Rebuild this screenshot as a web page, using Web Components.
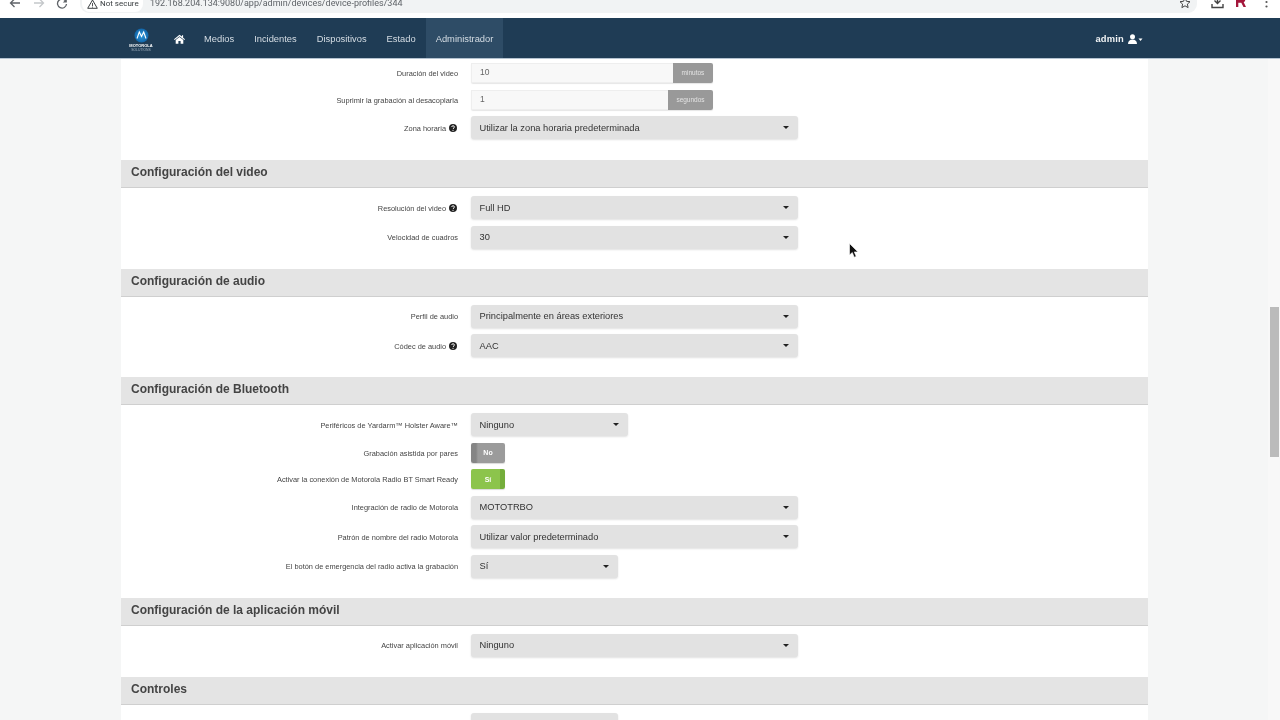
<!DOCTYPE html>
<html lang="es"><head><meta charset="utf-8"><title>Perfil de dispositivo</title>
<style>
html,body{margin:0;height:100%;overflow:hidden;background:#fff;font-family:"Liberation Sans",Arial,sans-serif;color:#333}
body{display:flex;flex-direction:column;height:720px;filter:blur(.3px)}
</style></head><body>
<browser-bar></browser-bar>
<top-nav></top-nav>
<page-main>
  <cfg-section flush pad="1px 0 17.500px">
    <cfg-row label="Duración del video" h="27"><cfg-input value="10" unit="minutos" unitw="40"></cfg-input></cfg-row>
    <cfg-row label="Suprimir la grabación al desacoplarla" h="27"><cfg-input value="1" unit="segundos" unitw="45"></cfg-input></cfg-row>
    <cfg-row label="Zona horaria" help><cfg-select value="Utilizar la zona horaria predeterminada"></cfg-select></cfg-row>
  </cfg-section>
  <cfg-section title="Configuración del video">
    <cfg-row label="Resolución del video" help><cfg-select value="Full HD"></cfg-select></cfg-row>
    <cfg-row label="Velocidad de cuadros"><cfg-select value="30"></cfg-select></cfg-row>
  </cfg-section>
  <cfg-section title="Configuración de audio">
    <cfg-row label="Perfil de audio"><cfg-select value="Principalmente en áreas exteriores"></cfg-select></cfg-row>
    <cfg-row label="Códec de audio" help><cfg-select value="AAC"></cfg-select></cfg-row>
  </cfg-section>
  <cfg-section title="Configuración de Bluetooth">
    <cfg-row label="Periféricos de Yardarm™ Holster Aware™"><cfg-select value="Ninguno" w="157"></cfg-select></cfg-row>
    <cfg-row label="Grabación asistida por pares" h="26.5"><cfg-toggle label="No"></cfg-toggle></cfg-row>
    <cfg-row label="Activar la conexión de Motorola Radio BT Smart Ready" h="26.5"><cfg-toggle label="Sí" on></cfg-toggle></cfg-row>
    <cfg-row label="Integración de radio de Motorola"><cfg-select value="MOTOTRBO"></cfg-select></cfg-row>
    <cfg-row label="Patrón de nombre del radio Motorola"><cfg-select value="Utilizar valor predeterminado"></cfg-select></cfg-row>
    <cfg-row label="El botón de emergencia del radio activa la grabación"><cfg-select value="Sí" w="147"></cfg-select></cfg-row>
  </cfg-section>
  <cfg-section title="Configuración de la aplicación móvil">
    <cfg-row label="Activar aplicación móvil"><cfg-select value="Ninguno"></cfg-select></cfg-row>
  </cfg-section>
  <cfg-section title="Controles">
    <cfg-row label=""><cfg-select value="" w="147"></cfg-select></cfg-row>
  </cfg-section>
</page-main>
<mouse-cursor></mouse-cursor>
<script>
function def(name, render){
  customElements.define(name, class extends HTMLElement{
    connectedCallback(){
      if(this.shadowRoot) return;
      this.attachShadow({mode:'open'}).innerHTML = render(this);
    }
  });
}
def('browser-bar', () => `<style>
:host{display:flex;align-items:flex-start;height:18px;flex:none;background:#fff;overflow:hidden;color:#5f6368;font-family:Roboto,"Liberation Sans",sans-serif}
.icons{display:flex;gap:9.500px;padding:0 0 0 8px;width:80px;box-sizing:border-box;margin-top:-3px}
svg{display:block;flex:none}
.pill{margin-top:-2px;width:1117px;height:15px;border-radius:0 0 9px 9px;background:#f1f3f4;display:flex;align-items:flex-start;flex:none;box-sizing:border-box;padding:0 6px 0 2px}
.sec{display:flex;align-items:center;gap:2px;background:#fff;border-radius:0 0 8px 8px;height:14px;padding:0 5px 2px;font-size:8px;line-height:10px;color:#3c4043;width:61px;box-sizing:border-box;flex:none;white-space:nowrap}
.url{font-size:9px;line-height:11px;margin-top:-.5px;color:#5f6368;margin-left:7px;flex:1;white-space:nowrap}
.star{margin-top:-1px}
.right{display:flex;align-items:center;margin-top:-4px;margin-left:14px;gap:11px}
</style>
<div class="icons">
<svg width="14" height="12" viewBox="0 0 14 12"><path d="M12 6H3M6.500 2 2.500 6l4 4" fill="none" stroke="#5f6368" stroke-width="1.300"/></svg>
<svg width="14" height="12" viewBox="0 0 14 12"><path d="M2 6h9M7.500 2l4 4-4 4" fill="none" stroke="#c4c7ca" stroke-width="1.300"/></svg>
<svg width="14" height="12" viewBox="0 0 14 12"><path d="M11 4.500A4.500 4.500 0 1 0 11.500 7" fill="none" stroke="#5f6368" stroke-width="1.300"/><path d="M11.800 1.500v4h-4z" fill="#5f6368"/></svg>
</div>
<div class="pill">
  <div class="sec"><svg width="11" height="10" viewBox="0 0 11 10"><path d="M5.500 1 10.300 9.300H.7z" fill="none" stroke="#3c4043" stroke-width="1"/><path d="M5.500 4v3M5.500 7.600v1" stroke="#3c4043" stroke-width=".9"/></svg><span>Not secure</span></div>
  <span class="url">192.168.204.134:9080/app/admin/devices/device-profiles/344</span>
  <svg class="star" width="12" height="12" viewBox="0 0 12 12"><path d="M6 1l1.500 3.300 3.500.4-2.600 2.400.7 3.500L6 8.800 2.900 10.600l.7-3.500L1 4.700l3.500-.4z" fill="none" stroke="#444" stroke-width="1"/></svg>
</div>
<div class="right">
  <svg width="13" height="13" viewBox="0 0 13 13"><path d="M6.500 0v7M3.500 4.500l3 3 3-3M1 8v3.500h11V8" fill="none" stroke="#444" stroke-width="1.400"/></svg>
  <svg width="12" height="13" viewBox="0 0 12 13"><path d="M1 1h6.500a2.800 2.800 0 0 1 1.200 5.300L11 11H8.500L6.300 6.700H3.300V11H1z" fill="#a3163b"/></svg>
  <svg style="margin-left:7px" width="3" height="13" viewBox="0 0 3 13"><circle cx="1.500" cy="6" r="1.100" fill="#555"/><circle cx="1.500" cy="10.500" r="1.100" fill="#555"/></svg>
</div>`);
def('top-nav', () => `<style>
:host{display:flex;align-items:stretch;height:40px;flex:none;background:#1f3c55;color:#d5dde4;font-size:9.350px;box-shadow:0 1px 0 #b4c3d1;position:relative;z-index:1;padding-left:128px}
.logo{width:26px;margin-right:9px;display:flex;flex-direction:column;align-items:center;padding-top:10px;box-sizing:border-box;color:#fff}
.logo b{font-size:4px;line-height:4px;margin-top:1px;white-space:nowrap}
.logo i{font-size:3.400px;line-height:4px;font-style:normal;color:#a9b8c6;white-space:nowrap}
a{display:flex;align-items:center;padding:2px 10px 0;color:inherit;text-decoration:none;white-space:nowrap}
a.home{padding:1px 9px 0 11px}
a.on{background:#2e4c66}
.user{margin-left:auto;margin-right:137px;padding-top:2px;display:flex;align-items:center;gap:4px;color:#f0f3f5;font-weight:bold;letter-spacing:.2px}
svg{display:block}
</style>
<div class="logo"><svg width="15" height="15" viewBox="0 0 15 15"><defs><radialGradient id="g"><stop offset="0" stop-color="#2d9be0"/><stop offset="1" stop-color="#1165a8"/></radialGradient></defs><circle cx="7.500" cy="7.500" r="7" fill="url(#g)"/><path d="M3 10.500 5.300 4 7.500 8.500 9.700 4l2.300 6.500" fill="none" stroke="#fff" stroke-width="1.100"/></svg><b>MOTOROLA</b><i>SOLUTIONS</i></div>
<a class="home" aria-label="Inicio"><svg width="11" height="10" viewBox="0 0 11 10"><path d="M5.500.8 0 5.300l.7.8L5.500 2.200l4.800 3.900.7-.8-1.900-1.600V1.200H8v1.200z" fill="#fff"/><path d="M5.500 3 1.700 6.100V9.700h2.700V7h2.200v2.700h2.700V6.100z" fill="#fff"/></svg></a>
<a>Medios</a><a>Incidentes</a><a>Dispositivos</a><a>Estado</a><a class="on">Administrador</a>
<div class="user"><span>admin</span><svg width="15" height="10" viewBox="0 0 15 10"><circle cx="4.500" cy="2.700" r="2.500" fill="#fff"/><path d="M0 10c0-3 1.800-4.500 4.500-4.500S9 7 9 10z" fill="#fff"/><path d="M10.500 4.500h4L12.500 7z" fill="#fff"/></svg></div>`);
def('page-main', () => `<style>
:host{display:flex;flex:1;min-height:0;background:#f5f6f6;overflow:hidden}
.panel{margin-left:121px;width:1027px;background:#fff;flex:none;overflow:hidden;height:100%}
.track{margin-left:auto;width:12px;flex:none;background:#f8f8f8}
.thumb{margin-top:249px;height:150px;width:9px;margin-left:2px;background:#bbb}
</style><div class="panel"><slot></slot></div><div class="track"><div class="thumb"></div></div>`);
def('cfg-section', el => `<style>
:host{display:block}
h2{margin:0;height:27px;box-sizing:content-box;background:#e4e4e4;border-bottom:1px solid #cfcfcf;font-size:12px;line-height:25px;color:#444;padding-left:10px;font-weight:bold}
.body{padding:${el.getAttribute('pad')||'5px 0 16.500px'}}
</style>${el.hasAttribute('flush')?'':`<h2>${el.getAttribute('title')}</h2>`}<div class="body"><slot></slot></div>`);
def('cfg-row', el => `<style>
:host{display:grid;grid-template-columns:${el.hasAttribute('help')?'336px':'337px'} 327px;column-gap:${el.hasAttribute('help')?'14px':'13px'};align-items:center;height:${el.getAttribute('h')||'29.5'}px}
.l{text-align:right;font-size:7.400px;color:#444;display:flex;justify-content:flex-end;align-items:center;gap:3px;white-space:nowrap;padding-top:1px}
svg{display:block;flex:none}
</style><div class="l"><span>${el.getAttribute('label')}</span>${el.hasAttribute('help')?`<svg width="8" height="8" viewBox="0 0 8 8"><circle cx="4" cy="4" r="4" fill="#222"/><path d="M2.700 3c0-1.700 2.700-1.700 2.700 0 0 1-1.300 1-1.300 2" fill="none" stroke="#fff" stroke-width=".9"/><circle cx="4" cy="6.300" r=".6" fill="#fff"/></svg>`:''}</div><div><slot></slot></div>`);
def('cfg-select', el => `<style>
:host{display:flex;align-items:center;justify-content:space-between;height:23px;width:${el.getAttribute('w')||327}px;box-sizing:border-box;padding:0 9px 0 8.500px;background:#e2e2e2;border-radius:3px;box-shadow:0 1px 2px rgba(0,0,0,.12);font-size:9.300px;color:#333}
i{width:0;height:0;border:3px solid transparent;border-top-color:#222;border-bottom:0}
</style><span>${el.getAttribute('value')}</span><i></i>`);
def('cfg-input', el => `<style>
:host{display:flex;height:20px;width:242px;font-size:8.500px;border-radius:2px;box-shadow:0 1px 1px rgba(0,0,0,.1)}
.v{flex:1;background:#f8f8f8;border:1px solid #eee;border-right:0;box-sizing:border-box;padding-left:8px;line-height:17px;color:#666}
.u{width:${el.getAttribute('unitw')}px;flex:none;background:#999;color:#e3e3e3;font-size:6.500px;line-height:19px;text-align:center;border-radius:0 2px 2px 0}
</style><div class="v">${el.getAttribute('value')}</div><div class="u">${el.getAttribute('unit')}</div>`);
def('cfg-toggle', el => {const on=el.hasAttribute('on');return `<style>
:host{display:flex;width:34px;height:20px;border-radius:2px;background:${on?'linear-gradient(90deg,#8cc44c 0 29px,#74ad3b 29px)':'linear-gradient(90deg,#858585 0 5px,#9b9b9b 7px)'};color:#fff;font-size:7px;font-weight:bold;align-items:center;justify-content:center;box-sizing:border-box;box-shadow:0 1px 1px rgba(0,0,0,.15)}
</style><span>${el.getAttribute('label')}</span>`});
def('mouse-cursor', () => `<style>:host{position:absolute;left:849px;top:243px;width:10px;height:15px;pointer-events:none}svg{display:block}</style><svg width="10" height="15" viewBox="0 0 10 15"><path d="M.5.5v11.500l2.800-2.500 1.900 4.700 2-.8-1.900-4.500h3.700z" fill="#111" stroke="#fff" stroke-width=".6"/></svg>`);
</script>
</body></html>
